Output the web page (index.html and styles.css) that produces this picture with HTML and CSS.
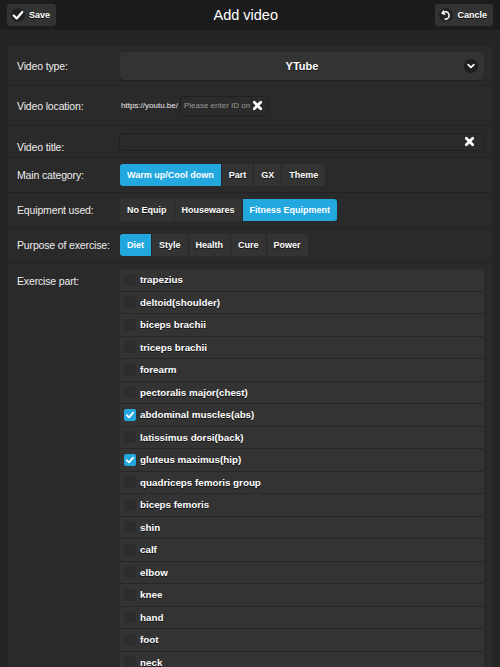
FILE: index.html
```html
<!DOCTYPE html>
<html lang="en">
<head>
    <meta charset="UTF-8">
    <meta name="viewport" content="width=device-width, initial-scale=1.0">
    <title>Add video</title>
    <link rel="stylesheet" href="styles.css">
</head>
<body>
<div class="header">
    <button class="hbtn" type="button">
        <span class="hicon">
            <svg viewBox="0 0 14 14" width="12" height="12"><path d="M2 7.5 L5.5 11 L12 3.5" fill="none" stroke="#fff" stroke-width="2.6" stroke-linecap="round" stroke-linejoin="round"/></svg>
        </span>Save
    </button>
    <h1 class="title">Add video</h1>
    <button class="hbtn" type="button">
        <span class="hicon">
            <svg viewBox="0 0 14 14" width="12" height="12"><path d="M4 2.5 L2.5 5 L5.5 6" fill="none" stroke="#fff" stroke-width="1.8" stroke-linecap="round" stroke-linejoin="round"/><path d="M3 4.8 A4.3 4.3 0 1 1 6 11.8" fill="none" stroke="#fff" stroke-width="1.8" stroke-linecap="round"/></svg>
        </span>Cancle
    </button>
</div>

<div class="panel">
    <div class="row row-tall">
        <label class="label">Video type:</label>
        <div class="select">
            <span>YTube</span>
            <span class="select-arrow">
                <svg viewBox="0 0 14 14" width="10" height="10"><path d="M3 5 L7 9 L11 5" fill="none" stroke="#fff" stroke-width="2.4" stroke-linecap="round" stroke-linejoin="round"/></svg>
            </span>
        </div>
    </div>

    <div class="row row-tall">
        <label class="label">Video location:</label>
        <div class="location">
            <span class="prefix">https://youtu.be/</span>
            <div class="input input-short">
                <span class="placeholder">Please enter ID on</span>
                <svg class="clear" viewBox="0 0 12 12" width="11" height="11"><path d="M2.5 2.5 L9.5 9.5 M9.5 2.5 L2.5 9.5" stroke="#fff" stroke-width="3" stroke-linecap="round"/></svg>
            </div>
        </div>
    </div>

    <div class="row row-title">
        <label class="label label-low">Video title:</label>
        <div class="input input-wide">
            <svg class="clear" viewBox="0 0 12 12" width="11" height="11"><path d="M2.5 2.5 L9.5 9.5 M9.5 2.5 L2.5 9.5" stroke="#fff" stroke-width="3" stroke-linecap="round"/></svg>
        </div>
    </div>

    <div class="row">
        <label class="label">Main category:</label>
        <div class="group">
            <button class="seg active">Warm up/Cool down</button>
            <button class="seg">Part</button>
            <button class="seg">GX</button>
            <button class="seg">Theme</button>
        </div>
    </div>

    <div class="row">
        <label class="label">Equipment used:</label>
        <div class="group">
            <button class="seg">No Equip</button>
            <button class="seg">Housewares</button>
            <button class="seg active">Fitness Equipment</button>
        </div>
    </div>

    <div class="row">
        <label class="label">Purpose of exercise:</label>
        <div class="group">
            <button class="seg active">Diet</button>
            <button class="seg">Style</button>
            <button class="seg">Health</button>
            <button class="seg">Cure</button>
            <button class="seg">Power</button>
        </div>
    </div>

    <div class="row row-list">
        <label class="label label-top">Exercise part:</label>
        <div class="checklist">
            <div class="check-item"><span class="box"></span>trapezius</div>
            <div class="check-item"><span class="box"></span>deltoid(shoulder)</div>
            <div class="check-item"><span class="box"></span>biceps brachii</div>
            <div class="check-item"><span class="box"></span>triceps brachii</div>
            <div class="check-item"><span class="box"></span>forearm</div>
            <div class="check-item"><span class="box"></span>pectoralis major(chest)</div>
            <div class="check-item"><span class="box checked"><svg viewBox="0 0 12 12" width="10" height="10"><path d="M2.2 6.3 L4.8 8.8 L9.8 3.2" fill="none" stroke="#fff" stroke-width="2.2" stroke-linecap="round" stroke-linejoin="round"/></svg></span>abdominal muscles(abs)</div>
            <div class="check-item"><span class="box"></span>latissimus dorsi(back)</div>
            <div class="check-item"><span class="box checked"><svg viewBox="0 0 12 12" width="10" height="10"><path d="M2.2 6.3 L4.8 8.8 L9.8 3.2" fill="none" stroke="#fff" stroke-width="2.2" stroke-linecap="round" stroke-linejoin="round"/></svg></span>gluteus maximus(hip)</div>
            <div class="check-item"><span class="box"></span>quadriceps femoris group</div>
            <div class="check-item"><span class="box"></span>biceps femoris</div>
            <div class="check-item"><span class="box"></span>shin</div>
            <div class="check-item"><span class="box"></span>calf</div>
            <div class="check-item"><span class="box"></span>elbow</div>
            <div class="check-item"><span class="box"></span>knee</div>
            <div class="check-item"><span class="box"></span>hand</div>
            <div class="check-item"><span class="box"></span>foot</div>
            <div class="check-item"><span class="box"></span>neck</div>
        </div>
    </div>
</div>
</body>
</html>
```

FILE: styles.css
```css
* {
    margin: 0;
    padding: 0;
    box-sizing: border-box;
    font-family: 'Liberation Sans', Arial, sans-serif;
}

body {
    background-color: #252525;
    color: #eee;
    overflow: hidden;
}

.header {
    height: 30px;
    display: flex;
    justify-content: space-between;
    align-items: center;
    padding: 0 7px;
    background-color: #1c1c1c;
}

.title {
    font-size: 14.5px;
    font-weight: normal;
    color: #fff;
}

.hbtn {
    height: 22px;
    display: flex;
    align-items: center;
    gap: 4px;
    padding: 0 6px 0 4px;
    border: none;
    border-radius: 3px;
    background-color: #333;
    color: #fff;
    font-size: 9px;
    font-weight: bold;
    text-shadow: 0 1px 0 #111;
}

.hicon {
    width: 14px;
    height: 14px;
    border-radius: 50%;
    background-color: #222;
    display: flex;
    align-items: center;
    justify-content: center;
}

.panel {
    margin: 16px 8px 0 8px;
    background-color: #2a2a2a;
}

.row {
    display: grid;
    grid-template-columns: 103px 1fr;
    align-items: center;
    height: 35px;
    padding: 0 8px 0 9px;
    border-bottom: 1px solid #232323;
}

.row-tall {
    height: 40px;
}

.row-title {
    height: 32px;
}

.row-list {
    height: auto;
    align-items: start;
    padding-top: 6px;
    border-bottom: none;
}

.label {
    font-size: 10.5px;
    letter-spacing: -0.15px;
    color: #eee;
}

.label-low {
    padding-top: 11px;
}

.label-top {
    padding-top: 6px;
}

.select {
    position: relative;
    height: 28px;
    display: flex;
    align-items: center;
    justify-content: center;
    background-color: #333;
    border-radius: 4px;
    box-shadow: 0 1px 1px rgba(0, 0, 0, 0.3);
    font-size: 11px;
    font-weight: bold;
    color: #fff;
    text-shadow: 0 1px 0 #111;
}

.select-arrow {
    position: absolute;
    right: 6px;
    top: 7px;
    width: 14px;
    height: 14px;
    border-radius: 50%;
    background-color: #1e1e1e;
    display: flex;
    align-items: center;
    justify-content: center;
}

.location {
    display: flex;
    align-items: center;
    gap: 2px;
}

.prefix {
    font-size: 8px;
    color: #eee;
    padding-left: 1px;
}

.input {
    display: flex;
    align-items: center;
    background-color: #2b2b2b;
    border: 1px solid #202020;
    border-radius: 3px;
}

.input-short {
    width: 88px;
    height: 20px;
    padding: 0 4px 0 3px;
    justify-content: space-between;
}

.input-wide {
    height: 18px;
    margin-left: -1px;
    justify-content: flex-end;
    padding-right: 8px;
}

.placeholder {
    font-size: 8px;
    color: #999;
    white-space: nowrap;
}

.clear {
    flex-shrink: 0;
}

.group {
    display: flex;
}

.seg {
    height: 22px;
    padding: 0 7px;
    border: none;
    border-right: 1px solid #262626;
    background-color: #333;
    color: #fff;
    font-size: 9px;
    font-weight: bold;
    text-shadow: 0 1px 0 #111;
}

.seg:first-child {
    border-radius: 3px 0 0 3px;
}

.seg:last-child {
    border-radius: 0 3px 3px 0;
    border-right: none;
}

.seg.active {
    background-color: #22a7df;
    text-shadow: none;
}

.checklist {
    background-color: #333;
    border-radius: 3px 3px 0 0;
}

.check-item {
    height: 22.5px;
    display: flex;
    align-items: center;
    gap: 4px;
    padding-left: 4px;
    border-bottom: 1px solid #272727;
    font-size: 9.8px;
    font-weight: bold;
    color: #fff;
    text-shadow: 0 1px 0 #111;
}

.box {
    width: 12px;
    height: 12px;
    border-radius: 2px;
    background-color: #2d2d2d;
    display: flex;
    align-items: center;
    justify-content: center;
}

.box.checked {
    background-color: #22a7df;
}
```
